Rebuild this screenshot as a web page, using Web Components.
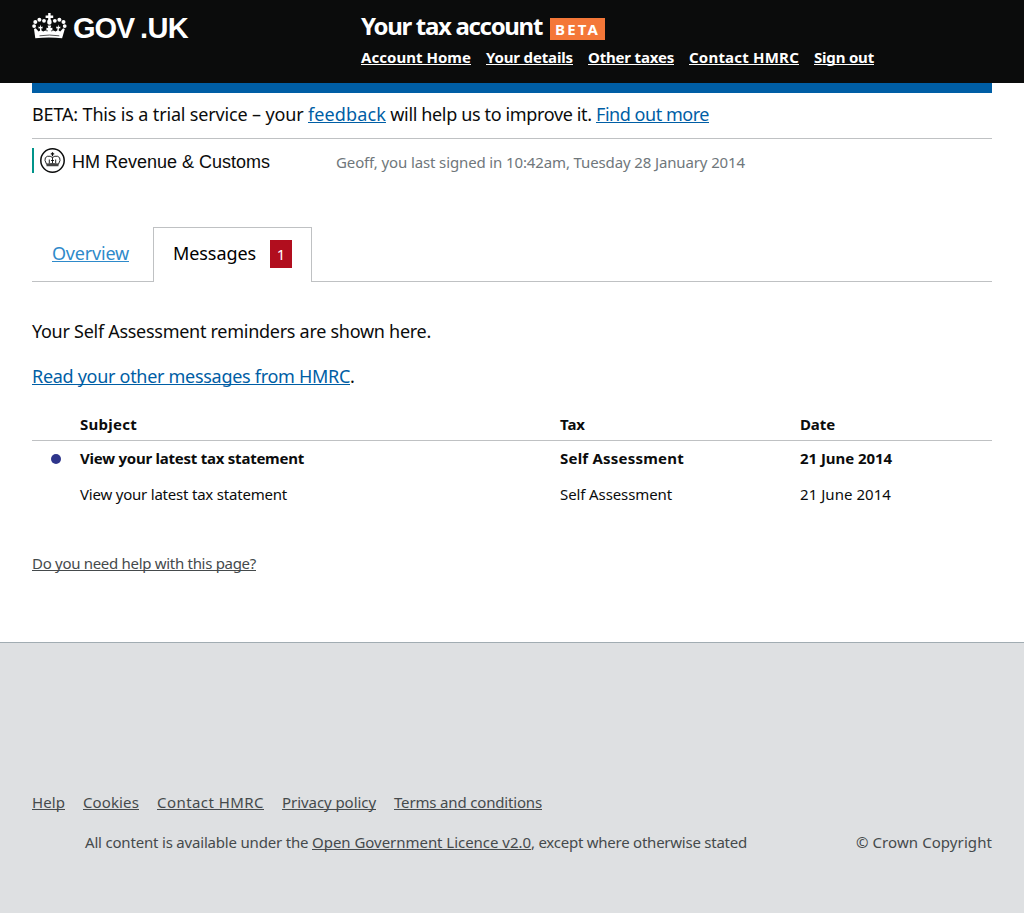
<!DOCTYPE html>
<html lang="en">
<head>
<meta charset="utf-8">
<title>Your tax account</title>
<style>
html,body{margin:0;padding:0;background:#fff}
body{font-family:"Noto Sans",sans-serif;color:#0b0c0c}
</style>
</head>
<body>
<tax-page></tax-page>
<script>
function define(name, css, html){
  customElements.define(name, class extends HTMLElement{
    constructor(){
      super();
      const t=document.createElement('template');
      t.innerHTML='<style>'+css+'</style>'+html;
      this.attachShadow({mode:'open'}).append(t.content.cloneNode(true));
    }
  });
}

define('tax-page',':host{display:block}main{padding:0 32px;height:559px;box-sizing:border-box}',
`<site-header></site-header>
<main><beta-bar></beta-bar><dept-bar></dept-bar><page-tabs></page-tabs><message-panel></message-panel></main>
<site-footer></site-footer>`);

define('gov-crown',':host{display:block;width:35px;height:27px}svg{display:block}',
`<svg width="35" height="27" viewBox="0 0 35 27" fill="#fff">
<path d="M16.200 0h2.400v2.600h2.600v2.400h-2.600v2h-2.400v-2h-2.600v-2.400h2.600z"/><ellipse cx="17.400" cy="9" rx="2.200" ry="2.800"/>
<circle cx="12" cy="7.800" r="1.900"/><circle cx="7.400" cy="6.700" r="2"/><circle cx="3.300" cy="9" r="2"/><circle cx="2.100" cy="13.100" r="1.900"/>
<circle cx="22.800" cy="7.800" r="1.900"/><circle cx="27.400" cy="6.700" r="2"/><circle cx="31.500" cy="9" r="2"/><circle cx="32.700" cy="13.100" r="1.900"/>
<path d="M2 16l1.700-.8L6.600 18.500l1.500-1.100-.3-2.200-1.300.4v-2l1.400.3.500-2.400.700 2.400 1.500-.3v2l-1.300-.4.200 2.200 1.700 1.200 2.200-1 1.800 1 .9-1.400-1.700.5v-3l1.900.4-.7-2.600h3.600l-.7 2.600 1.900-.4v3l-1.700-.5.9 1.400 1.800-1 2.200 1 1.700-1.200.2-2.200-1.300.4v-2l1.500.3.700-2.400.5 2.400 1.400-.3v2l-1.300-.4-.3 2.200 1.500 1.100 2.900-3.300 1.700.8-2.700 9.200q-13-1.200-26.800 0z"/>
<path d="M7.500 22.800q10-1.500 19.800 0" stroke="#0b0c0c" stroke-width=".7" fill="none"/>
</svg>`);

define('site-header',`:host{display:block;height:83px;background:#0b0c0c;color:#fff}
.in{display:grid;grid-template-columns:329px 1fr;padding:0 32px}
.logo{display:flex;padding-top:13px;font:bold 29px/28px "Liberation Sans",sans-serif}
.word{display:flex;gap:6px;margin-left:6px;padding-top:1px}
.title{display:flex;gap:8px;padding-top:9px;font-size:24px;font-weight:700;line-height:34px}
.beta{height:22px;margin-top:9px;padding:0 5px;background:#f47738;font-size:15px;line-height:22px}
nav{display:flex;gap:15px;font-size:15px;font-weight:700;line-height:24px;margin-top:2px}`,
`<div class="in"><div class="logo"><gov-crown></gov-crown><div class="word"><fit-text w="61">GOV</fit-text><fit-text w="48">.UK</fit-text></div></div>
<div><div class="title"><fit-text w="181">Your tax account</fit-text><div class="beta"><fit-text w="45">BETA</fit-text></div></div>
<nav><fit-text w="110" link>Account Home</fit-text><fit-text w="87" link>Your details</fit-text><fit-text w="86" link>Other taxes</fit-text><fit-text w="110" link>Contact HMRC</fit-text><fit-text w="60" link>Sign out</fit-text></nav></div></div>`);

define('beta-bar',`:host{display:block;height:56px;box-sizing:border-box;border-top:10px solid #005ea5;border-bottom:1px solid #bfc1c3}
p{margin:0;padding-top:7px;font-size:18px;line-height:28px;white-space:nowrap;display:flex}.l{color:#005ea5}`,
`<p><fit-text w="276">BETA: This is a trial service – your </fit-text><fit-text class="l" w="78" link>feedback</fit-text><fit-text w="210"> will help us to improve it. </fit-text><fit-text class="l" w="113" link>Find out more</fit-text></p>`);

define('hmrc-crest',':host{display:block;width:26px;height:26px}svg{display:block}',
`<svg width="26" height="26" viewBox="0 0 26 26" fill="none" stroke="#0b0c0c">
<circle cx="12.500" cy="12.500" r="11.700" stroke-width="1.500"/>
<path d="M12.500 4.300v4M10.800 5.800h3.400" stroke-width="1.200"/>
<path d="M6.700 16.500L5 12.500q-.5-3.300 2.300-4.200 3.200-.7 5.200 1.200 2-1.900 5.200-1.200 2.800.9 2.300 4.200l-1.700 4M12.500 9.500v7M9.300 11.500v4M15.700 11.500v4M11 12.500h3" stroke-width=".9"/>
<path d="M6.500 15.600q6-1.400 12 0v2.600h-12z" fill="#444" stroke="none"/>
</svg>`);

define('dept-bar',`:host{display:flex;padding-top:9px;height:25px}
.org{display:flex;width:304px;box-sizing:border-box;border-left:2px solid #00948a;padding-left:6px;font:18px/26px "Liberation Sans",sans-serif}
.org fit-text{margin-left:6px;line-height:28px}.who{color:#6f777b;font-size:15px;line-height:29px}`,
`<div class="org"><hmrc-crest></hmrc-crest><fit-text w="198">HM Revenue &amp; Customs</fit-text></div><fit-text class="who" w="409">Geoff, you last signed in 10:42am, Tuesday 28 January 2014</fit-text>`);

define('page-tabs',`:host{display:flex;margin-top:54px;height:55px;font-size:18px;line-height:50px;box-sizing:border-box;border-bottom:1px solid #bfc1c3}
.o{color:#2e8aca;margin:1px 24px 0 20px}
.tab{display:flex;box-sizing:border-box;width:159px;height:55px;border:1px solid #bfc1c3;border-bottom:0;background:#fff;padding-left:19px;color:#000}
.n{margin:12px 0 0 14px;width:22px;height:28px;background:#b10e1e;color:#fff;font-size:15px;line-height:29px;text-align:center}`,
`<fit-text class="o" w="77" link>Overview</fit-text><div class="tab"><fit-text w="83">Messages</fit-text><div class="n">1</div></div>`);

define('message-panel',`:host{display:block;padding-top:35px;font-size:18px;line-height:28px}
p{margin:0 0 17px;display:flex}.l{color:#005ea5}p+message-row{margin-top:-1px}
.help{font-size:15px;line-height:24px;color:#454a4c;margin-top:38px}`,
`<p><fit-text w="399">Your Self Assessment reminders are shown here.</fit-text></p>
<p><fit-text class="l" w="318" link>Read your other messages from HMRC</fit-text><span>.</span></p>
<message-row head><fit-text slot="subject" w="57">Subject</fit-text><fit-text slot="tax" w="25">Tax</fit-text><fit-text slot="date" w="35">Date</fit-text></message-row>
<message-row unread><fit-text slot="subject" w="224">View your latest tax statement</fit-text><fit-text slot="tax" w="124">Self Assessment</fit-text><fit-text slot="date" w="92">21 June 2014</fit-text></message-row>
<message-row><fit-text slot="subject" w="207">View your latest tax statement</fit-text><fit-text slot="tax" w="112">Self Assessment</fit-text><fit-text slot="date" w="91">21 June 2014</fit-text></message-row>
<fit-text class="help" w="224" link>Do you need help with this page?</fit-text>`);

define('message-row',`:host{display:grid;grid-template-columns:48px 480px 240px 1fr;height:36px;line-height:34px;font-size:15px}
:host([head]){height:34px;font-weight:700;line-height:37px;border-bottom:1px solid #bfc1c3}:host([unread]){font-weight:700}
i{display:none;width:10px;height:10px;border-radius:50%;background:#2e358b;margin:13px 0 0 19px}:host([unread]) i{display:block}`,
`<span><i></i></span><span><slot name="subject"></slot></span><span><slot name="tax"></slot></span><span><slot name="date"></slot></span>`);

define('site-footer',`:host{display:block;box-sizing:border-box;height:271px;padding:147px 32px 0;background:#dee0e2;border-top:1px solid #a1acb2;color:#454a4c;font-size:15px;line-height:24px}
nav{display:flex;gap:18px}.r{display:flex;justify-content:space-between;margin-top:16px;padding-left:53px}.r div{display:flex}`,
`<nav><fit-text w="33" link>Help</fit-text><fit-text w="56" link>Cookies</fit-text><fit-text w="107" link>Contact HMRC</fit-text><fit-text w="94" link>Privacy policy</fit-text><fit-text w="148" link>Terms and conditions</fit-text></nav>
<div class="r"><div><fit-text w="227">All content is available under the </fit-text><fit-text w="219" link>Open Government Licence v2.0</fit-text><fit-text w="216">, except where otherwise stated</fit-text></div><fit-text w="136">© Crown Copyright</fit-text></div>`);

// A run of text tracked to an exact measure given by its w attribute.
customElements.define('fit-text', class extends HTMLElement{
  constructor(){
    super();
    this.attachShadow({mode:'open'}).innerHTML='<style>:host{display:inline-block;white-space:pre;flex:none}:host([link]){text-decoration:underline;text-decoration-thickness:1px;text-underline-offset:1px;text-decoration-skip-ink:none;cursor:pointer}</style><slot></slot>';
  }
  connectedCallback(){
    const w=parseFloat(this.getAttribute('w'));
    const natural=this.getBoundingClientRect().width;
    if(natural) this.style.letterSpacing=((w-natural)/this.textContent.length)+'px';
  }
});
</script>
</body>
</html>
